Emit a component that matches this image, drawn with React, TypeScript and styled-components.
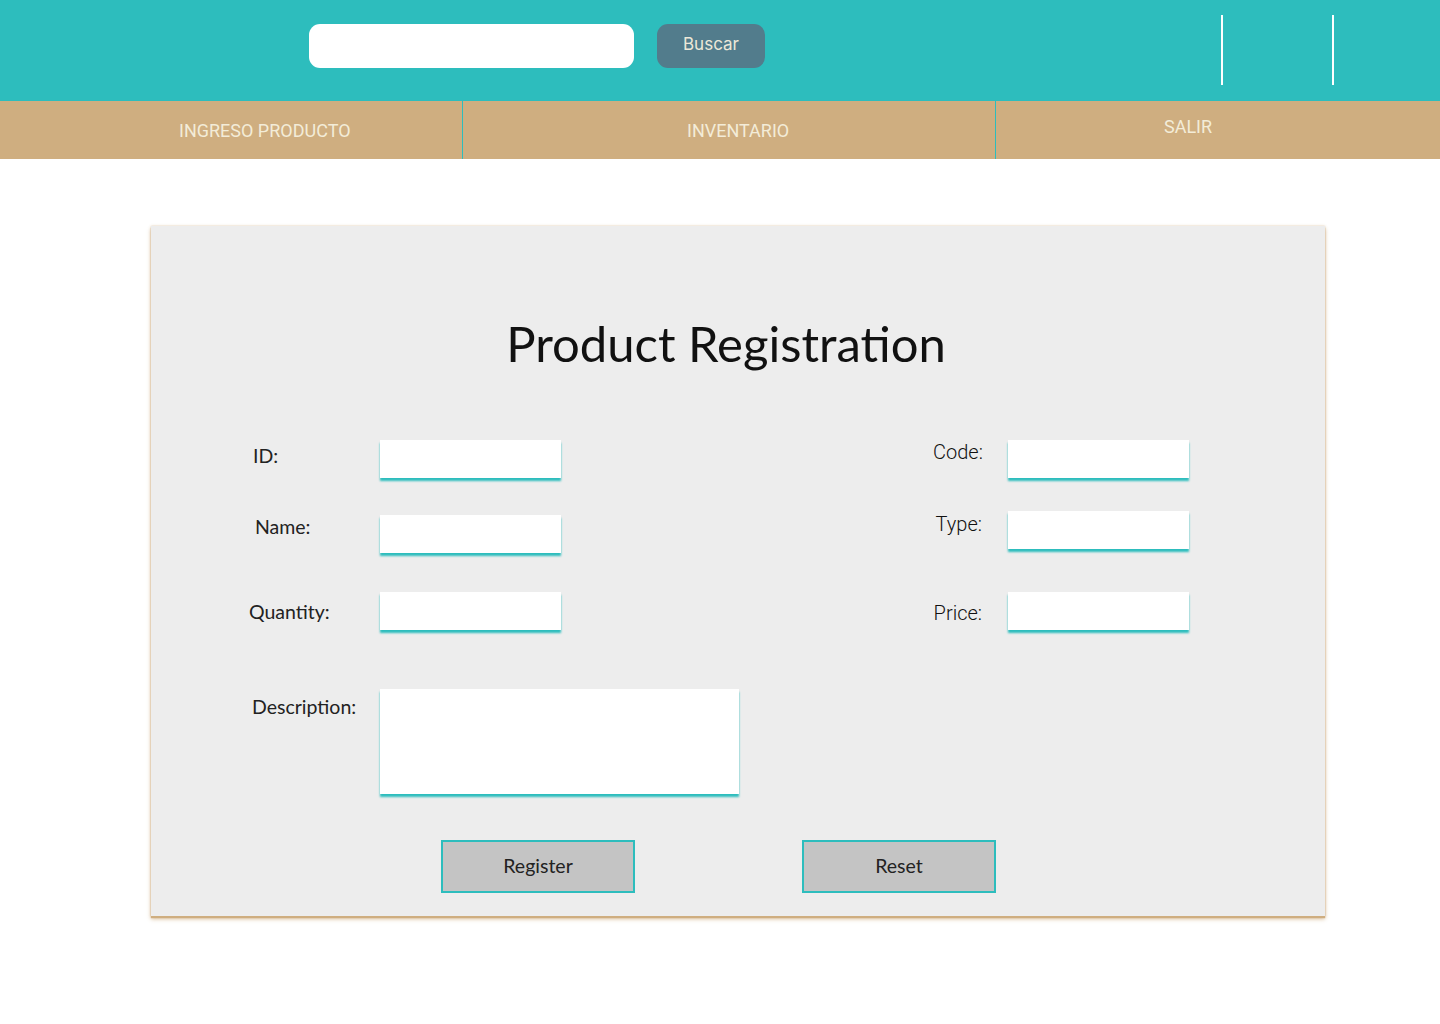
import React from "react";
import styled, { createGlobalStyle } from "styled-components";

const Global = createGlobalStyle`
  html, body { margin: 0; padding: 0; background: #ffffff; }
  body { font-family: "Roboto", "Liberation Sans", sans-serif; }
  * { box-sizing: border-box; }
`;

const Header = styled.header`
  height: 101px;
  background: #2dbdbd;
  display: flex;
  align-items: flex-start;
`;

const SearchArea = styled.div`
  display: flex;
  gap: 23px;
  padding: 24px 0 0 309px;
`;

const SearchInput = styled.input`
  width: 325px;
  height: 44px;
  border: none;
  border-radius: 11px;
  background: #ffffff;
  outline: none;
  padding: 0 14px;
`;

const SearchButton = styled.button`
  width: 108px;
  height: 44px;
  border: none;
  border-radius: 11px;
  background: #527c8c;
  color: #ece8d8;
  font-family: "Inter", sans-serif;
  font-size: 17px;
  padding: 0 0 4px;
`;

const Dividers = styled.div`
  margin-left: auto;
  margin-right: 106px;
  margin-top: 15px;
  display: flex;
  gap: 109px;
`;

const VLine = styled.span`
  display: block;
  width: 2px;
  height: 70px;
  background: #ffffff;
`;

const Nav = styled.nav`
  height: 58px;
  background: #cfae80;
  display: flex;
`;

const NavItem = styled.a<{ $w: number; $pl: number; $pt: number; $border?: boolean }>`
  width: ${(p) => p.$w}px;
  padding-left: ${(p) => p.$pl}px;
  padding-top: ${(p) => p.$pt}px;
  border-right: ${(p) => (p.$border ? "1px solid #2dbdbd" : "none")};
  color: #f3ecd8;
  font-family: "Roboto", sans-serif;
  font-size: 18px;
  line-height: 22px;
  text-decoration: none;
`;

const Card = styled.section`
  width: 1174px;
  margin: 67px 0 40px 151px;
  background: #ededed;
  box-shadow: 0 2px 1px #cfae80, 0 3px 4px rgba(207, 174, 128, 0.8), 0 0 2px rgba(207, 174, 128, 0.6);
  padding: 89px 0 23px;
`;

const Title = styled.h1`
  margin: 0;
  text-align: center;
  padding-right: 24px;
  font-family: "Lato", sans-serif;
  font-weight: 400;
  font-size: 49px;
  line-height: 56px;
  color: #111;
`;

const FormArea = styled.div`
  display: flex;
  margin-top: 69px;
  padding-left: 98px;
`;

const Column = styled.div<{ $w: number }>`
  width: ${(p) => p.$w}px;
  display: flex;
  flex-direction: column;
`;

const Row = styled.div<{ $mt: number }>`
  display: flex;
  align-items: flex-start;
  margin-top: ${(p) => p.$mt}px;
`;

const LeftLabel = styled.label<{ $pt: number; $dx?: number }>`
  width: 131px;
  padding-top: ${(p) => p.$pt}px;
  padding-left: ${(p) => p.$dx ?? 0}px;
  font-family: "Lato", sans-serif;
  font-weight: 400;
  font-size: 19.5px;
  line-height: 24px;
  color: #222;
`;

const RightLabel = styled.label<{ $pt: number }>`
  width: 49px;
  text-align: right;
  padding-right: 26px;
  padding-top: ${(p) => p.$pt}px;
  font-family: "Roboto", sans-serif;
  font-weight: 300;
  font-size: 20px;
  line-height: 24px;
  color: #111;
  box-sizing: content-box;
  white-space: nowrap;
`;

const Field = styled.input<{ $w?: number }>`
  width: ${(p) => p.$w ?? 181}px;
  height: 38px;
  border: none;
  background: #ffffff;
  outline: none;
  box-shadow: 0 3px 2px #2dbdbd;
`;

const TextArea = styled.textarea`
  width: 359px;
  height: 105px;
  border: none;
  background: #ffffff;
  outline: none;
  resize: none;
  box-shadow: 0 3px 2px #2dbdbd;
`;

const Buttons = styled.div`
  display: flex;
  gap: 167px;
  margin-top: 46px;
  padding-left: 290px;
`;

const ActionButton = styled.button`
  width: 194px;
  height: 53px;
  background: #c4c4c4;
  border: 2px solid #2dbdbd;
  font-family: "Lato", sans-serif;
  font-weight: 400;
  font-size: 19.5px;
  color: #222;
  padding: 0 0 2px;
`;

export default function App() {
  return (
    <>
      <Global />
      <Header>
        <SearchArea>
          <SearchInput aria-label="buscar" />
          <SearchButton>Buscar</SearchButton>
        </SearchArea>
        <Dividers>
          <VLine />
          <VLine />
        </Dividers>
      </Header>
      <Nav>
        <NavItem $w={463} $pl={179} $pt={19} $border>INGRESO PRODUCTO</NavItem>
        <NavItem $w={533} $pl={224} $pt={19} $border>INVENTARIO</NavItem>
        <NavItem $w={444} $pl={168} $pt={15}>SALIR</NavItem>
      </Nav>
      <Card>
        <Title>Product Registration</Title>
        <FormArea>
          <Column $w={684}>
            <Row $mt={0}>
              <LeftLabel $pt={4} $dx={4}>ID:</LeftLabel>
              <Field />
            </Row>
            <Row $mt={37}>
              <LeftLabel $pt={-2} $dx={6}>Name:</LeftLabel>
              <Field />
            </Row>
            <Row $mt={39}>
              <LeftLabel $pt={8}>Quantity:</LeftLabel>
              <Field />
            </Row>
            <Row $mt={59}>
              <LeftLabel $pt={6} $dx={3}>Description:</LeftLabel>
              <TextArea />
            </Row>
          </Column>
          <Column $w={300}>
            <Row $mt={0}>
              <RightLabel $pt={0}>Code:</RightLabel>
              <Field />
            </Row>
            <Row $mt={33}>
              <RightLabel $pt={1}>Type:</RightLabel>
              <Field />
            </Row>
            <Row $mt={43}>
              <RightLabel $pt={9}>Price:</RightLabel>
              <Field />
            </Row>
          </Column>
        </FormArea>
        <Buttons>
          <ActionButton>Register</ActionButton>
          <ActionButton>Reset</ActionButton>
        </Buttons>
      </Card>
    </>
  );
}
